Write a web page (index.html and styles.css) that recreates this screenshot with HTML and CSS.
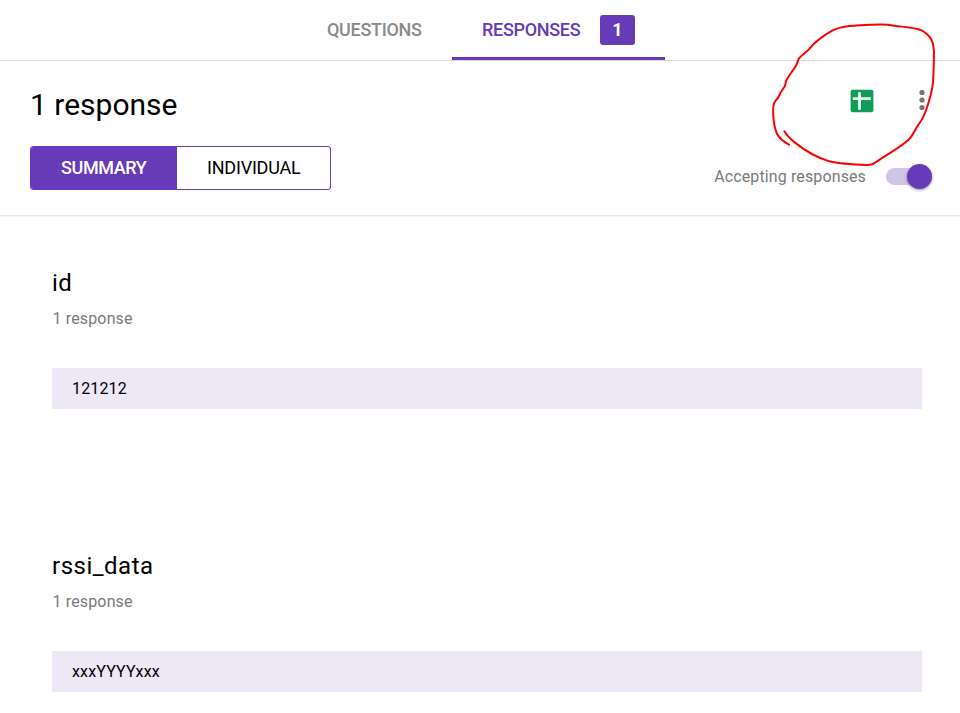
FILE: index.html
```html
<!DOCTYPE html>
<html lang="en">
<head>
<meta charset="utf-8">
<title>Responses</title>
<link rel="stylesheet" href="styles.css">
</head>
<body>
<nav class="tabs">
  <div class="tab"><span class="tab-label">QUESTIONS</span></div>
  <div class="tab active"><span class="tab-label">RESPONSES</span><span class="badge">1</span></div>
</nav>
<header class="summary">
  <div class="left">
    <h1>1 response</h1>
    <div class="segmented">
      <div class="segment selected"><span>SUMMARY</span></div>
      <div class="segment"><span>INDIVIDUAL</span></div>
    </div>
  </div>
  <div class="right">
    <div class="actions">
      <svg class="sheets" width="24" height="24" viewBox="0 0 24 24"><rect x=".6" y=".7" width="22.8" height="22.6" rx="2" fill="#0f9d58"/><path d="M9.5 3.3v17.5M2.8 9.6h18" stroke="#eef8f3" stroke-width="2.9"/></svg>
      <svg class="more" width="6" height="22" viewBox="0 0 6 22" fill="#757575"><circle cx="3" cy="2.5" r="2.6"/><circle cx="3" cy="10" r="2.6"/><circle cx="3" cy="17.5" r="2.6"/></svg>
    </div>
    <div class="accepting">
      <span class="accepting-label">Accepting responses</span>
      <span class="toggle"><span class="thumb"></span></span>
    </div>
  </div>
</header>
<main>
  <section class="question">
    <h2>id</h2>
    <p class="count">1 response</p>
    <div class="answer">121212</div>
  </section>
  <section class="question">
    <h2>rssi_data</h2>
    <p class="count">1 response</p>
    <div class="answer">xxxYYYYxxx</div>
  </section>
</main>
<svg class="annotation" width="200" height="160" viewBox="0 0 600 480"><path d="M73 349C80 361 91 372 104 382C134 406 175 429 208 439C239 447 285 449 322 450Q337 450 344 444C373 422 416 401 446 374C457 363 464 347 472 334C482 321 491 306 496 291C507 262 516 232 519 203C521 170 522 139 522 111C521 90 518 77 510 67C502 58 493 49 480 44C454 37 419 35 385 29C347 26 307 31 268 33C250 35 233 39 218 46C199 57 178 71 162 86C155 93 151 100 144 106C135 114 124 121 117 130C112 139 112 147 106 155C98 168 87 181 80 194C76 203 77 210 73 216C66 225 61 232 58 241C56 250 48 253 44 261C38 271 39 288 40 303C41 322 44 340 50 354C58 371 70 380 87 389"/></svg>
</body>
</html>
```
FILE: styles.css
```css
* { box-sizing: border-box; }
body { margin: 0; width: 960px; height: 713px; background: #fff; color: #000; font-family: Roboto, sans-serif; position: relative; }
h1, h2, p { margin: 0; font-weight: 400; }
.tabs { display: flex; height: 61px; padding-left: 297px; border-bottom: 1px solid #dadada; }
.tab { display: flex; align-items: center; height: 60px; width: 155px; padding: 0 30px; font-size: 18px; font-weight: 500; color: #8a8a8a; }
.tab.active { width: 213px; color: #673ab7; border-bottom: 3px solid #673ab7; padding-top: 3px; }
.tab-label { width: 98px; white-space: nowrap; letter-spacing: -.3px; padding-bottom: 2px; }
.badge { margin-left: 20px; width: 35px; height: 30px; border-radius: 3px; background: #673ab7; color: #fff; text-align: center; line-height: 30px; font-weight: 700; }
.summary { display: flex; justify-content: space-between; height: 155px; padding: 0 28px 0 30px; border-bottom: 1px solid #e8e8e8; box-shadow: 0 1px 0 #f7f7f7; }
.left { padding-top: 26px; }
h1 { font-size: 30px; line-height: 36px; }
.segmented { display: flex; margin-top: 23px; width: 301px; height: 44px; border: 1px solid #673ab7; border-radius: 3px; overflow: hidden; }
.segment { display: flex; align-items: center; padding: 0 0 2px 30px; font-size: 18px; letter-spacing: -.2px; }
.selected { width: 146px; background: #673ab7; color: #fff; font-weight: 500; letter-spacing: -.4px; }
.right { display: flex; flex-direction: column; align-items: flex-end; }
.actions { display: flex; align-items: center; gap: 45px; height: 24px; margin-top: 28px; padding-right: 7px; }
.accepting { display: flex; align-items: center; margin-top: 51px; height: 24px; }
.accepting-label { font-size: 16px; color: #7b7b7b; letter-spacing: .12px; margin-right: 20px; }
.toggle { display: flex; justify-content: flex-end; align-items: center; width: 46px; height: 17px; border-radius: 9px; background: #d1c4e9; }
.thumb { width: 25px; height: 25px; border-radius: 50%; background: #673ab7; box-shadow: 0 1px 3px rgba(0,0,0,.45); }
main { padding: 51px 38px 0 52px; }
.question { height: 283px; }
.question:last-child { height: auto; }
h2 { font-size: 24px; line-height: 32px; letter-spacing: .5px; }
.count { margin-top: 10px; font-size: 16px; line-height: 20px; color: #7b7b7b; letter-spacing: .15px; padding-left: .5px; }
.answer { margin-top: 39px; height: 41px; padding-left: 20px; background: #ede7f6; font-size: 16px; line-height: 41px; letter-spacing: .15px; }
.annotation { position: absolute; left: 760px; top: 15px; fill: none; stroke: #f00; stroke-width: 6; stroke-linecap: round; stroke-linejoin: round; }
```
